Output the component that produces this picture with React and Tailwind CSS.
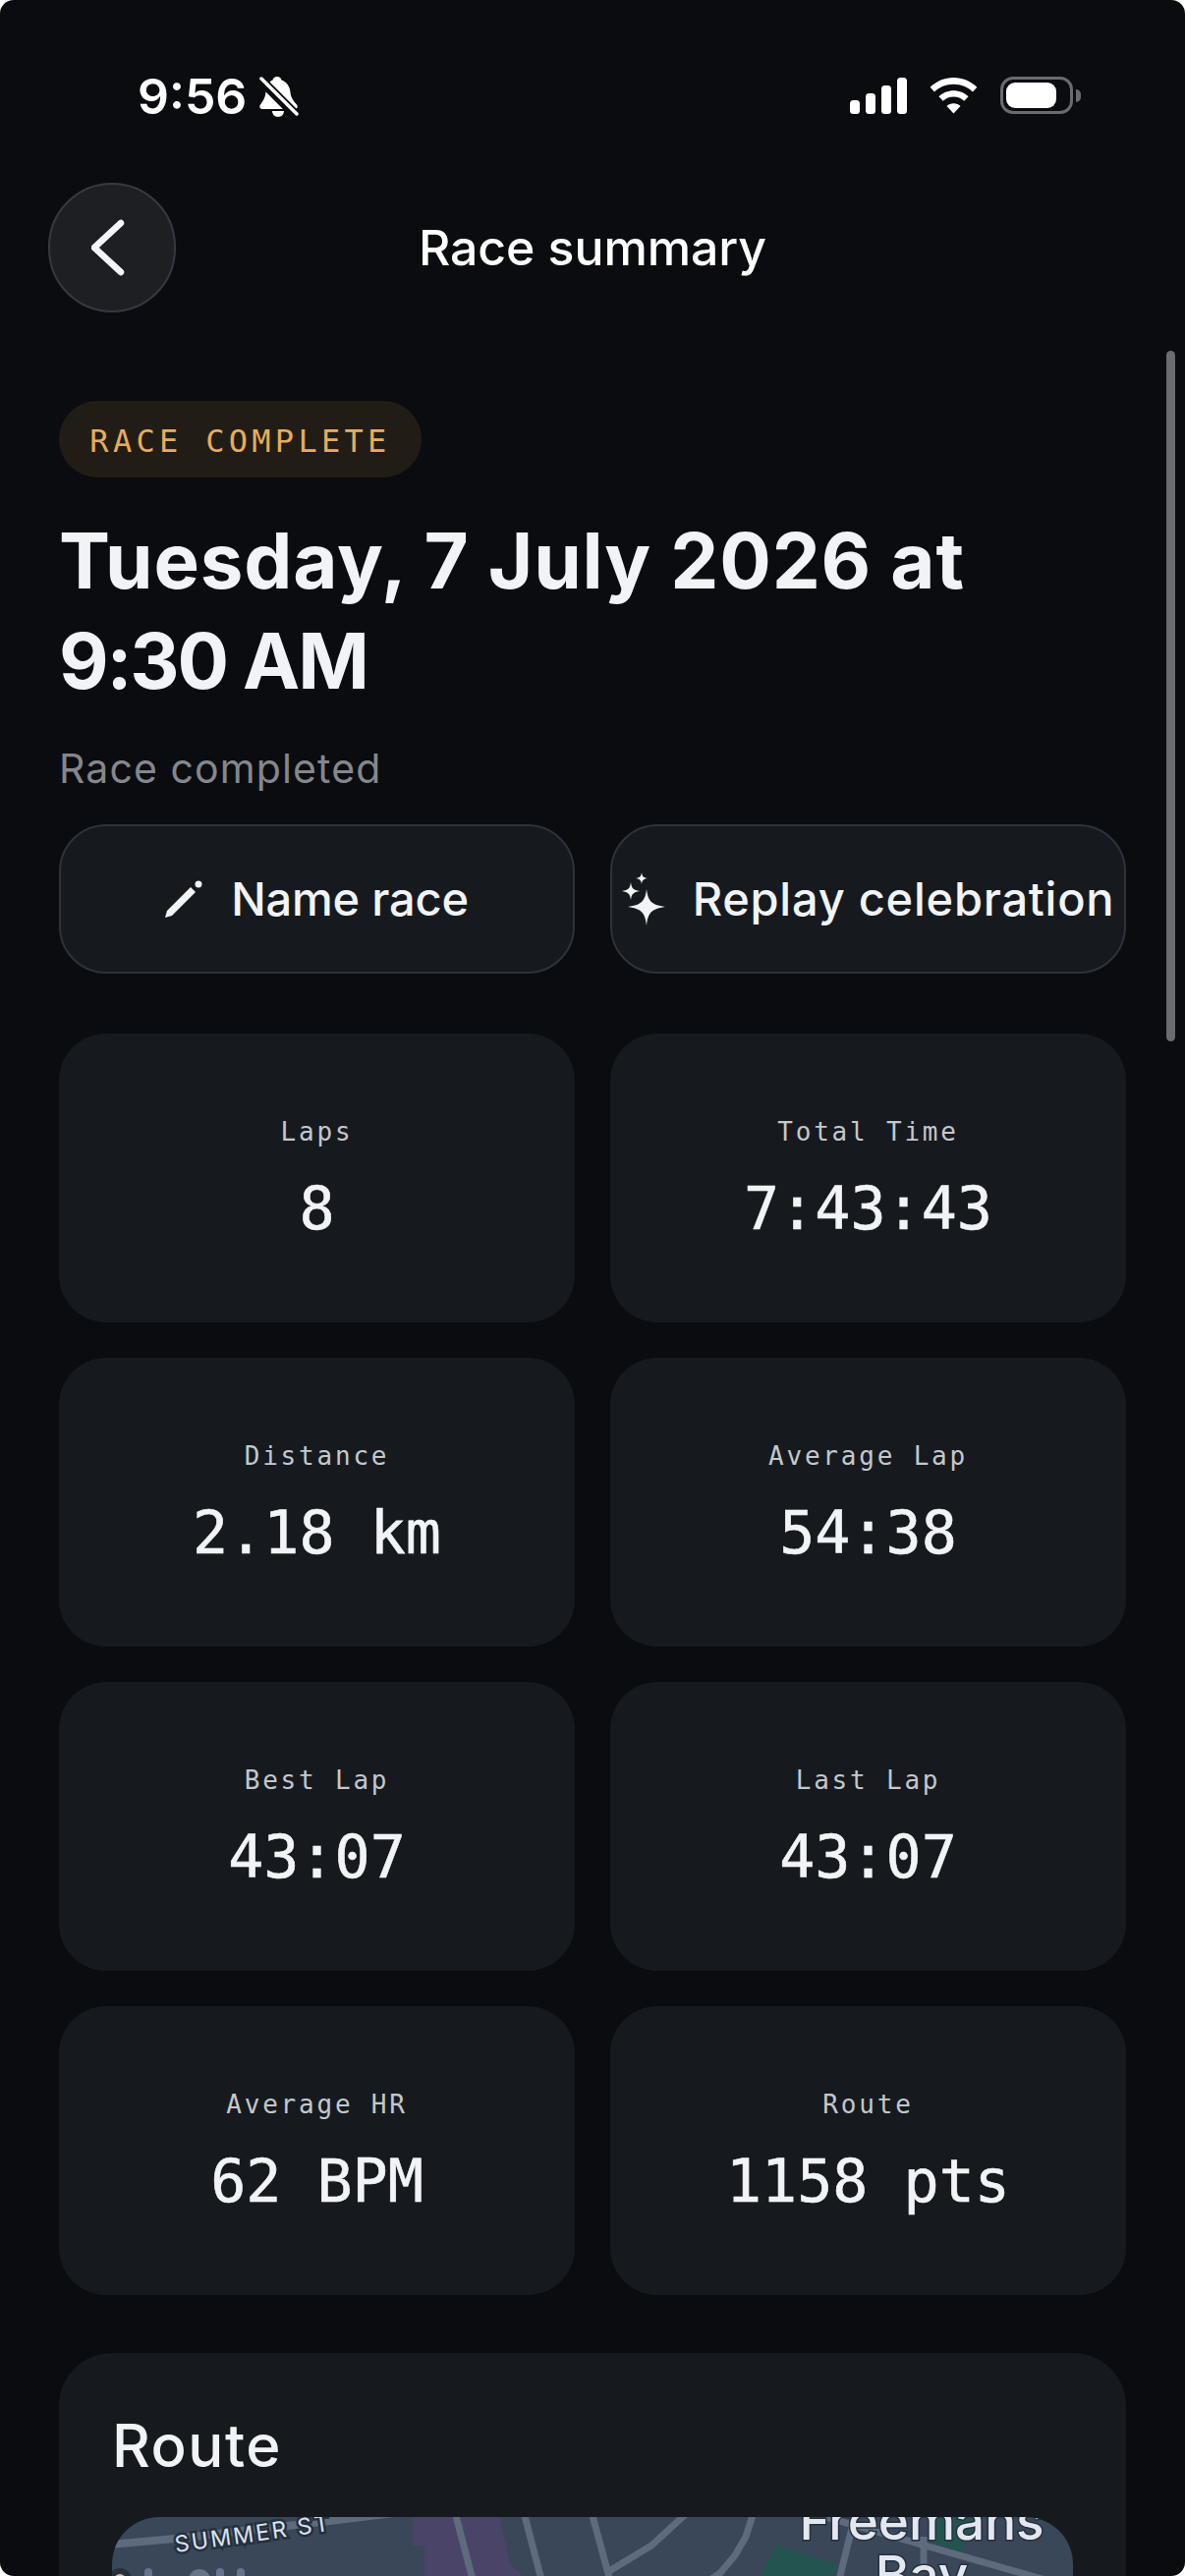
const sans = "font-['Inter','Liberation_Sans',sans-serif]";
const mono = "font-['DejaVu_Sans_Mono','Liberation_Mono',monospace]";

function Stat({ label, value }) {
  return (
    <div className="flex h-[294px] flex-col items-center rounded-[48px] bg-[#161a1f] pt-[83px]">
      <div className={`${mono} text-[26px] leading-[34px] tracking-[2.800px] text-[#c4c7cc]`}>{label}</div>
      <div className={`${mono} mt-[26px] text-[60px] leading-[70px] text-[#f1f3f7] [-webkit-text-stroke:0.6px_#f1f3f7]`}>{value}</div>
    </div>
  );
}

function StatusBar() {
  return (
    <div className="flex h-[186px] shrink-0 items-start justify-between pl-[140px] pr-[106px] pt-[72px]">
      <div className="flex items-center gap-[13px]">
        <span className="font-['Inter',sans-serif] text-[50px] font-semibold leading-[52px] text-white">9:56</span>
        <svg width="40" height="44" viewBox="0 0 40 44" fill="none" className="mt-[2px]">
          <path d="M18 1c2.500 0 4 1.500 4.500 3.500C28 6.500 31 11 31.500 17c.5 5.500 3 8.500 6.500 12.500 1.500 2 .5 4.500-2 4.500H3c-2.500 0-3.500-2.500-2-4.500C4 25.500 6 22 6.500 17 7 11 9 6.500 13.500 4.500 14 2.500 15.500 1 18 1z" fill="#fff" />
          <path d="M13 36h12c0 3-2.500 6-6 6s-6-3-6-6z" fill="#fff" />
          <path d="M-1 2l40 40" stroke="#0a0c10" strokeWidth="10" />
          <path d="M2 3l36 36" stroke="#fff" strokeWidth="3.500" strokeLinecap="round" />
        </svg>
      </div>
      <div className="flex items-center gap-[23px] pt-[6px]">
        <svg width="58" height="37" viewBox="0 0 58 37" fill="#fff">
          <rect x="0" y="23" width="10" height="14" rx="3.500" />
          <rect x="16" y="16" width="10" height="21" rx="3.500" />
          <rect x="32" y="8" width="10" height="29" rx="3.500" />
          <rect x="48" y="0" width="10" height="37" rx="3.500" />
        </svg>
        <svg width="49" height="37" viewBox="0 0 50 38" fill="#fff">
          <path d="M25 0c9.500 0 18 3.800 24.500 10L45 15C40 10 33 7 25 7S10 10 5 15L.5 10C7 3.800 15.500 0 25 0z" />
          <path d="M25 13.500c6 0 11.500 2.300 15.500 6.200L36 24.500c-3-3-6.800-4.500-11-4.500s-8 1.500-11 4.500L9.500 19.700c4-3.900 9.500-6.200 15.500-6.200z" />
          <path d="M25 27c2.800 0 5.300 1 7.200 2.800L25 37.500l-7.200-7.700C19.700 28 22.200 27 25 27z" />
        </svg>
        <div className="flex items-center gap-[3px]">
          <div className="flex h-[38px] w-[74px] items-center rounded-[13px] border-[3px] border-[#6b6b6d] p-[3px]">
            <div className="h-full w-[51px] rounded-[9px] bg-white" />
          </div>
          <div className="h-[13px] w-[5px] rounded-r-full bg-[#6b6b6d]" />
        </div>
      </div>
    </div>
  );
}

function RouteMap() {
  const road = "#5d6b7c";
  return (
    <div className="mt-[39px] h-[200px] overflow-hidden rounded-t-[48px] bg-[#3a4758]">
      <svg width="978" height="200" viewBox="0 0 978 200" fill="none">
        <path d="M-4 28L64 22L213 5L303 -6" stroke={road} strokeWidth="8" />
        <path d="M306 0H394L406 50L416 57L422 80H318V29H306z" fill="#4a4469" />
        <path d="M349 -5L370 75M419 -5L440 75M488 -5L507 65" stroke={road} strokeWidth="7" />
        <path d="M586 -5L549 29L506 55M653 -5L645 20L634 39L619 57L600 70" stroke={road} strokeWidth="7" />
        <path d="M676 29L736 47L734 80H650z" fill="#23544f" />
        <path d="M838 -2H884L864 35L829 24z" fill="#23544f" />
        <path d="M757 -5L736 80M726 0L978 72M826 20V50" stroke={road} strokeWidth="7" />
        <path d="M37 56V70M110 56V70M131 56V70" stroke="#66738a" strokeWidth="8" strokeLinecap="round" />
        <circle cx="89" cy="64" r="11" fill="#66738a" />
        <text transform="translate(65 36) rotate(-8)" fill="#dbe3ee" stroke="#25303e" strokeWidth="5" paintOrder="stroke" fontFamily="Inter, sans-serif" fontSize="23" letterSpacing="2.500">SUMMER ST</text>
        <text x="824" y="23" textAnchor="middle" fill="#e3e8f0" stroke="#25303e" strokeWidth="3" paintOrder="stroke" fontFamily="Inter, sans-serif" fontSize="53" fontWeight="500">Freemans</text>
        <text x="824" y="78" textAnchor="middle" fill="#e3e8f0" stroke="#25303e" strokeWidth="3" paintOrder="stroke" fontFamily="Inter, sans-serif" fontSize="53" fontWeight="500">Bay</text>
        <circle cx="8" cy="64" r="9" fill="#e7b988" stroke="#25303e" strokeWidth="6" />
      </svg>
    </div>
  );
}

export default function App() {
  const stats = [
    ["Laps", "8"], ["Total Time", "7:43:43"],
    ["Distance", "2.18 km"], ["Average Lap", "54:38"],
    ["Best Lap", "43:07"], ["Last Lap", "43:07"],
    ["Average HR", "62 BPM"], ["Route", "1158 pts"],
  ];
  return (
    <div className="h-[2622px] w-[1206px] overflow-hidden bg-white">
      <div className="relative flex h-full w-full flex-col overflow-hidden rounded-[14px] bg-[#0a0c10]">
        <StatusBar />
        <div className="relative flex h-[132px] shrink-0 items-center justify-center">
          <button className="absolute left-[49px] top-0 flex h-[132px] w-[130px] items-center justify-center rounded-full border-2 border-[#353a42] bg-[#1d1f23]">
            <svg width="40" height="66" viewBox="0 0 40 66" fill="none" className="mr-[3px]">
              <path d="M30 8L3 33l27 25" stroke="#f4f5f8" strokeWidth="6.500" strokeLinecap="round" strokeLinejoin="round" />
            </svg>
          </button>
          <h1 className={`${sans} text-[50px] font-medium leading-[60px] tracking-[-0.1px] text-white`}>Race summary</h1>
        </div>
        <div className="flex flex-col px-[60px] pt-[90px]">
          <div className="flex h-[78px] w-[369px] items-center justify-center rounded-full bg-[#211d16]">
            <span className={`${mono} pt-[3px] text-[32px] tracking-[4.300px] text-[#e6ad5c]`}>RACE COMPLETE</span>
          </div>
          <h2 className={`${sans} mt-[34px] text-[78px] font-bold leading-[102px] tracking-[0.800px] text-[#f1f3f7]`}>Tuesday, 7 July 2026 at<br /><span className="tracking-[-2.200px]">9:30 AM</span></h2>
          <p className={`${sans} mt-[33px] text-[41px] leading-[50px] tracking-[1.100px] text-[#85878c]`}>Race completed</p>
          <div className="mt-[32px] grid grid-cols-2 gap-[36px]">
            <button className="flex h-[152px] items-center justify-center gap-[29px] rounded-[48px] border-2 border-[#2e333a] bg-[#161a1f]">
              <svg width="38" height="38" viewBox="0 0 38 38" fill="#f1f3f7">
                <path d="M0 38l2-7L26 7l5 5L7 36z" />
                <circle cx="34" cy="4" r="3.500" />
              </svg>
              <span className={`${sans} text-[47px] font-medium tracking-[-0.2px] text-[#f1f3f7]`}>Name race</span>
            </button>
            <button className="flex h-[152px] items-center justify-center gap-[28px] whitespace-nowrap rounded-[48px] border-2 border-[#2e333a] bg-[#161a1f]">
              <svg width="44" height="54" viewBox="0 0 44 54" fill="#f1f3f7" className="shrink-0">
                <path d="M25 17c1.500 11 4 16 19 18-15 2-17.500 7-19 19-1.500-12-4-17-19-19 15-2 17.500-7 19-18z" />
                <path d="M9 10c.7 6 2.500 8 9 9-6.500 1-8.300 3-9 9-.7-6-2.500-8-9-9 6.500-1 8.300-3 9-9z" />
                <path d="M20 0c.4 3.500 1.500 5.500 6 6-4.500.5-5.600 2.500-6 6-.4-3.500-1.500-5.500-6-6 4.500-.5 5.600-2.500 6-6z" />
              </svg>
              <span className={`${sans} text-[47px] font-medium tracking-[0.750px] text-[#f1f3f7]`}>Replay celebration</span>
            </button>
          </div>
          <div className="mt-[61px] grid grid-cols-2 gap-[36px]">
            {stats.map(([l, v]) => <Stat key={l} label={l} value={v} />)}
          </div>
          <section className="mt-[59px] rounded-t-[54px] bg-[#161a1f] px-[54px] pt-[60px]">
            <h3 className={`${sans} text-[60px] font-medium leading-[68px] tracking-[1.500px] text-[#f1f3f7]`}>Route</h3>
            <RouteMap />
          </section>
        </div>
        <div className="absolute left-[1187px] top-[357px] h-[703px] w-[9px] rounded-full bg-[#6b6c6f]" />
      </div>
    </div>
  );
}
